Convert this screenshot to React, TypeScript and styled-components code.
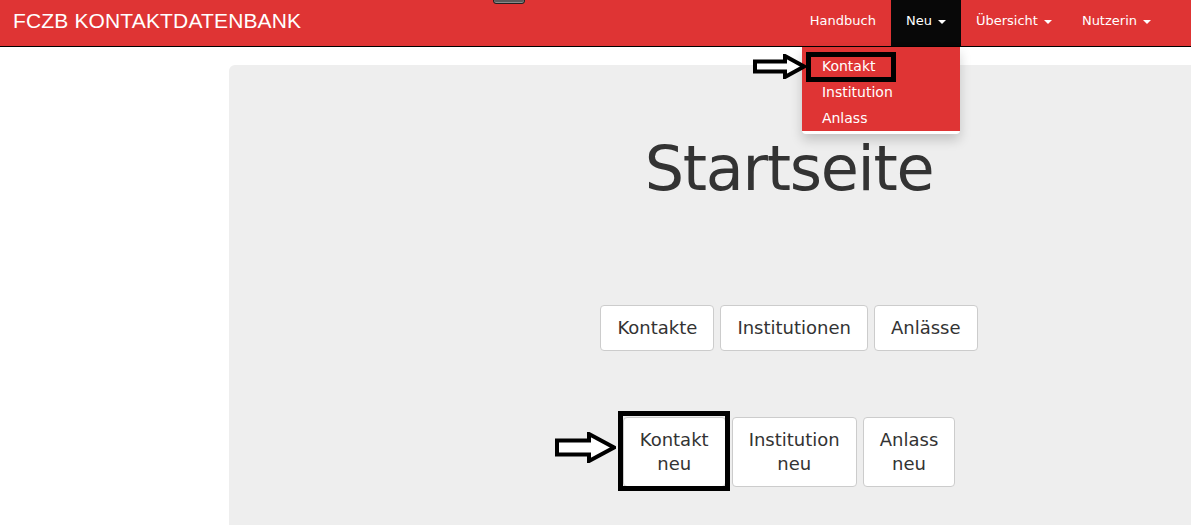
import React from 'react'
import styled, { createGlobalStyle } from 'styled-components'

const RED = '#df3434'
const TEXT = '#333333'

const GlobalStyle = createGlobalStyle`
  html, body {
    margin: 0;
    padding: 0;
    background: #ffffff;
    overflow: hidden;
  }
  body {
    font-family: 'DejaVu Sans', Verdana, sans-serif;
    color: ${TEXT};
  }
  * {
    box-sizing: border-box;
  }
`

const Page = styled.div`
  width: 1191px;
  height: 525px;
  overflow: hidden;
`

/* ---------- navbar ---------- */

const Navbar = styled.header`
  position: relative;
  display: flex;
  justify-content: space-between;
  align-items: flex-start;
  height: 47px;
  padding: 0 25px 0 13px;
  background: ${RED};
  border-bottom: 1px solid #000;
  z-index: 10;
`

const Brand = styled.a`
  padding-top: 9px;
  font-family: 'Liberation Sans', Arial, sans-serif;
  font-size: 21px;
  line-height: 24px;
  letter-spacing: 0.15px;
  color: #fff;
  text-decoration: none;
  white-space: nowrap;
`

/** the little window tab peeking in at the top edge of the screenshot */
const Notch = styled.div`
  position: absolute;
  left: 493px;
  top: -5px;
  width: 32px;
  height: 9px;
  border: 1px solid #222;
  border-radius: 3px;
  background: #5a5a5a;
  box-shadow: inset 0 -1px 0 #8a8a8a;
`

const NavList = styled.ul`
  display: flex;
  margin: 0;
  padding: 0;
  list-style: none;
`

const NavItem = styled.li`
  position: relative;
`

const NavLink = styled.a<{ $active?: boolean }>`
  display: block;
  height: 46px;
  padding: 11px 15px 15px;
  font-size: 13px;
  line-height: 20px;
  color: #fff;
  text-decoration: none;
  white-space: nowrap;
  background: ${({ $active }) => ($active ? '#080808' : 'transparent')};
`

const Caret = styled.span`
  display: inline-block;
  width: 0;
  height: 0;
  margin-left: 6px;
  vertical-align: middle;
  border-top: 4px solid #fff;
  border-left: 4px solid transparent;
  border-right: 4px solid transparent;
`

const Menu = styled.div`
  position: absolute;
  top: calc(100% + 1px);
  right: 1px;
  width: 158px;
  padding-bottom: 3px;
  background: #fff;
  border-radius: 0 0 4px 4px;
  box-shadow: 0 6px 12px rgba(0, 0, 0, 0.18);
`

const MenuList = styled.ul`
  margin: 0;
  padding: 6px 0 0;
  list-style: none;
  background: ${RED};
`

const MenuItem = styled.li`
  position: relative;
  padding: 3px 20px;
  font-size: 14px;
  line-height: 20px;
  color: #fff;
  white-space: nowrap;
`

/* ---------- annotations (drawn over the page) ---------- */

const Frame = styled.span<{ $w: number; $h: number; $x: number; $y: number }>`
  position: absolute;
  left: ${({ $x }) => $x}px;
  top: ${({ $y }) => $y}px;
  width: ${({ $w }) => $w}px;
  height: ${({ $h }) => $h}px;
  border: 5px solid #000;
  pointer-events: none;
`

const ArrowBox = styled.span<{ $x: string; $y: number }>`
  position: absolute;
  left: ${({ $x }) => $x};
  top: ${({ $y }) => $y}px;
  display: block;
  line-height: 0;
`

const OutlineArrow: React.FC<{ w: number; h: number; shaft: number; head: number }> = ({ w, h, shaft, head }) => {
  const mid = h / 2
  const s = shaft / 2
  const pts = [
    [2, mid - s],
    [head, mid - s],
    [head, 2],
    [w - 2, mid],
    [head, h - 2],
    [head, mid + s],
    [2, mid + s],
  ]
    .map((p) => p.join(','))
    .join(' ')
  return (
    <svg width={w} height={h} viewBox={`0 0 ${w} ${h}`}>
      <polygon points={pts} fill="#fff" stroke="#000" strokeWidth={4} strokeLinejoin="miter" />
    </svg>
  )
}

/* ---------- main panel ---------- */

const Panel = styled.main`
  width: 1120px;
  min-height: 480px;
  margin: 18px 0 0 229px;
  padding-top: 70px;
  background: #eeeeee;
  border-radius: 6px;
  text-align: center;
`

const Title = styled.h1`
  margin: 0;
  font-size: 62px;
  line-height: 68px;
  font-weight: 400;
  letter-spacing: -1.3px;
  color: ${TEXT};
`

const ButtonRow = styled.div<{ $top: number }>`
  display: flex;
  justify-content: center;
  align-items: flex-start;
  gap: 6px;
  margin-top: ${({ $top }) => $top}px;
`

const Marked = styled.span`
  position: relative;
  display: inline-flex;
`

const Button = styled.a`
  display: inline-block;
  padding: 10px 16px;
  font-size: 18px;
  line-height: 24px;
  color: ${TEXT};
  text-decoration: none;
  background: #fff;
  border: 1px solid #cccccc;
  border-radius: 4px;
  white-space: nowrap;
`

export default function App() {
  return (
    <Page>
      <GlobalStyle />
      <Navbar>
        <Brand href="#">FCZB KONTAKTDATENBANK</Brand>
        <Notch />
        <NavList>
          <NavItem>
            <NavLink href="#">Handbuch</NavLink>
          </NavItem>
          <NavItem>
            <NavLink href="#" $active>
              Neu<Caret />
            </NavLink>
            <Menu>
              <MenuList>
                <MenuItem>
                  Kontakt
                  <Frame $x={4} $y={-1} $w={90} $h={30} />
                  <ArrowBox $x="-49px" $y={1}>
                    <OutlineArrow w={53} h={25} shaft={10} head={32} />
                  </ArrowBox>
                </MenuItem>
                <MenuItem>Institution</MenuItem>
                <MenuItem>Anlass</MenuItem>
              </MenuList>
            </Menu>
          </NavItem>
          <NavItem>
            <NavLink href="#">
              Übersicht<Caret />
            </NavLink>
          </NavItem>
          <NavItem>
            <NavLink href="#">
              Nutzerin<Caret />
            </NavLink>
          </NavItem>
        </NavList>
      </Navbar>

      <Panel>
        <Title>Startseite</Title>

        <ButtonRow $top={102}>
          <Button href="#">Kontakte</Button>
          <Button href="#">Institutionen</Button>
          <Button href="#">Anlässe</Button>
        </ButtonRow>

        <ButtonRow $top={66}>
          <Marked>
            <Button href="#">
              Kontakt
              <br />
              neu
            </Button>
            <Frame $x={-5} $y={-6} $w={112} $h={80} />
            <ArrowBox $x="-68px" $y={15}>
              <OutlineArrow w={61} h={31} shaft={14} head={34} />
            </ArrowBox>
          </Marked>
          <Button href="#">
            Institution
            <br />
            neu
          </Button>
          <Button href="#">
            Anlass
            <br />
            neu
          </Button>
        </ButtonRow>
      </Panel>
    </Page>
  )
}
